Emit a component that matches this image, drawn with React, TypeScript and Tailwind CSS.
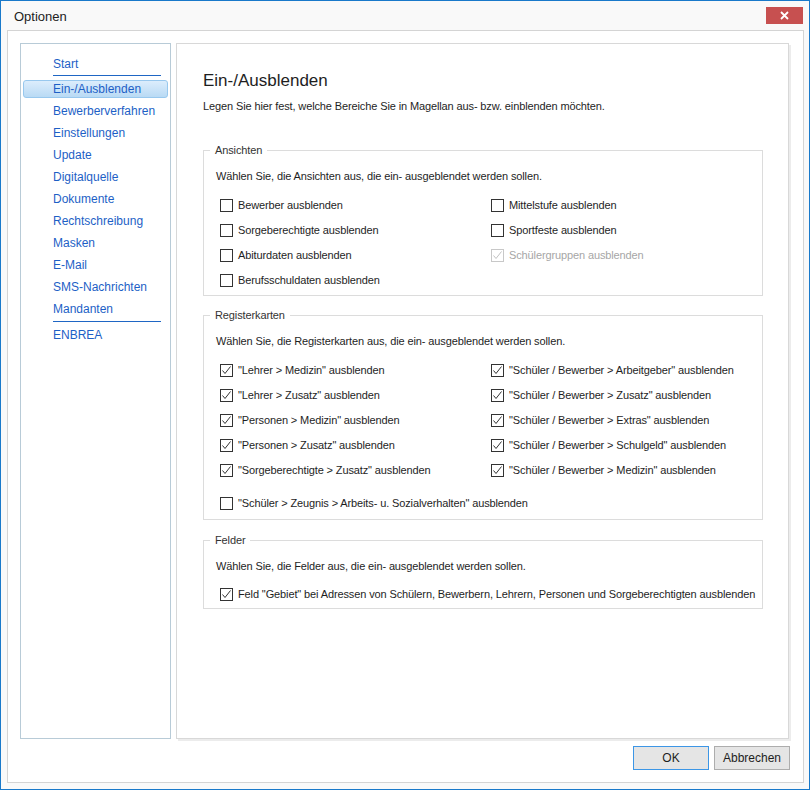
const NAV = [
  "Ein-/Ausblenden",
  "Bewerberverfahren",
  "Einstellungen",
  "Update",
  "Digitalquelle",
  "Dokumente",
  "Rechtschreibung",
  "Masken",
  "E-Mail",
  "SMS-Nachrichten",
  "Mandanten",
];

type Item = { label: string; checked?: boolean; disabled?: boolean };

const ANSICHTEN: Item[] = [
  { label: "Bewerber ausblenden" },
  { label: "Mittelstufe ausblenden" },
  { label: "Sorgeberechtigte ausblenden" },
  { label: "Sportfeste ausblenden" },
  { label: "Abiturdaten ausblenden" },
  { label: "Schülergruppen ausblenden", checked: true, disabled: true },
  { label: "Berufsschuldaten ausblenden" },
];

const REGISTER: Item[] = [
  { label: "\"Lehrer > Medizin\" ausblenden", checked: true },
  { label: "\"Schüler / Bewerber > Arbeitgeber\" ausblenden", checked: true },
  { label: "\"Lehrer > Zusatz\" ausblenden", checked: true },
  { label: "\"Schüler / Bewerber > Zusatz\" ausblenden", checked: true },
  { label: "\"Personen > Medizin\" ausblenden", checked: true },
  { label: "\"Schüler / Bewerber > Extras\" ausblenden", checked: true },
  { label: "\"Personen > Zusatz\" ausblenden", checked: true },
  { label: "\"Schüler / Bewerber > Schulgeld\" ausblenden", checked: true },
  { label: "\"Sorgeberechtigte > Zusatz\" ausblenden", checked: true },
  { label: "\"Schüler / Bewerber > Medizin\" ausblenden", checked: true },
];

function Check({ label, checked, disabled }: Item) {
  const stroke = disabled ? "#c2c2c2" : "#333333";
  return (
    <div className="flex items-center h-[25px] whitespace-nowrap">
      <span
        className={`w-[13px] h-[13px] shrink-0 border bg-white flex items-center justify-center ${
          disabled ? "border-[#c8c8c8]" : "border-[#333333]"
        }`}
      >
        {checked && (
          <svg width="11" height="11" viewBox="0 0 11 11">
            <polyline points="1.5,5.5 4,8.5 9.5,1.5" fill="none" stroke={stroke} strokeWidth="1" />
          </svg>
        )}
      </span>
      <span className={`ml-[5px] ${disabled ? "text-[#a6a6a6]" : "text-[#1e1e1e]"}`}>{label}</span>
    </div>
  );
}

function Group({ title, className, children }: { title: string; className?: string; children: React.ReactNode }) {
  return (
    <fieldset className={`border border-[#dcdcdc] px-[12px] w-[560px] min-w-0 overflow-hidden ${className ?? ""}`}>
      <legend className="-ml-[6px] px-[5px] leading-[16px] text-[#333]">{title}</legend>
      {children}
    </fieldset>
  );
}

export default function App() {
  return (
    <div
      className="w-[810px] h-[790px] border border-[#1979ca] bg-[#f9f9f9] flex flex-col text-[11px]"
      style={{ fontFamily: '"Liberation Sans", Arial, sans-serif' }}
    >
      {/* title bar */}
      <div className="h-[29px] shrink-0 flex items-start pl-[13px] pr-[6px]">
        <span className="mt-[8px] text-[13px] leading-[16px] text-[#222]">Optionen</span>
        <button className="ml-auto mt-[6px] w-[37px] h-[17px] bg-[#c75050] text-white flex items-center justify-center">
          <svg width="9" height="9" viewBox="0 0 9 9">
            <path d="M1 1L8 8M8 1L1 8" stroke="#fff" strokeWidth="1.8" />
          </svg>
        </button>
      </div>

      <div className="flex-1 flex pl-[6px] pr-[5px] pb-[6px]">
        <div className="flex-1 border border-[#d4d4d4] bg-white flex flex-col px-[12px] pt-[12px] pb-[12px]">
          <div className="flex-1 flex gap-[5px]">
            {/* sidebar */}
            <nav className="w-[151px] border border-[#b8cbd7] pt-[9px] text-[12px] text-[#1d5fc6] flex flex-col">
              <div className="h-[22px] leading-[22px] pl-[32px]">Start</div>
              <div className="ml-[32px] w-[108px] h-px bg-[#1f66c4]" />
              {NAV.map((n, i) =>
                i === 0 ? (
                  <div key={n} className="h-[22px] mt-[2px] flex items-center px-[2px]">
                    <div className="w-full h-[18px] pl-[29px] leading-[16px] rounded-[3px] border border-[#98c8ee] bg-gradient-to-b from-[#dcedfc] to-[#b9daf4]">
                      {n}
                    </div>
                  </div>
                ) : (
                  <div key={n} className="h-[22px] leading-[22px] pl-[32px]">
                    {n}
                  </div>
                )
              )}
              <div className="ml-[32px] mt-[1px] w-[108px] h-px bg-[#1f66c4]" />
              <div className="h-[22px] leading-[22px] pl-[32px] mt-[2px]">ENBREA</div>
            </nav>

            {/* content */}
            <main className="flex-1 mr-[2px] border border-[#d8d8d8] shadow-[2px_2px_0_#ececec] pl-[26px] pt-[25px] tracking-[-0.12px]">
              <h1 className="text-[17px] leading-[24px] tracking-normal text-[#1e1e1e]">Ein-/Ausblenden</h1>
              <p className="mt-[5px] leading-[16px] text-[#1e1e1e]">
                Legen Sie hier fest, welche Bereiche Sie in Magellan aus- bzw. einblenden möchten.
              </p>

              <Group title="Ansichten" className="mt-[28px] pb-[2px]">
                <p className="mt-[10px] leading-[16px] text-[#1e1e1e]">
                  Wählen Sie, die Ansichten aus, die ein- ausgeblendet werden sollen.
                </p>
                <div className="mt-[9px] grid grid-cols-[271px_1fr] pl-[4px]">
                  {ANSICHTEN.map((a) => (
                    <Check key={a.label} {...a} />
                  ))}
                </div>
              </Group>

              <Group title="Registerkarten" className="mt-[11px] pb-[3px]">
                <p className="mt-[10px] leading-[16px] text-[#1e1e1e]">
                  Wählen Sie, die Registerkarten aus, die ein- ausgeblendet werden sollen.
                </p>
                <div className="mt-[9px] grid grid-cols-[271px_1fr] pl-[4px]">
                  {REGISTER.map((a) => (
                    <Check key={a.label} {...a} />
                  ))}
                </div>
                <div className="mt-[8px] pl-[4px]">
                  <Check label={"\"Schüler > Zeugnis > Arbeits- u. Sozialverhalten\" ausblenden"} />
                </div>
              </Group>

              <Group title="Felder" className="mt-[12px] pb-[1px]">
                <p className="mt-[10px] leading-[16px] text-[#1e1e1e]">
                  Wählen Sie, die Felder aus, die ein- ausgeblendet werden sollen.
                </p>
                <div className="mt-[8px] pl-[4px]">
                  <Check
                    checked
                    label={"Feld \"Gebiet\" bei Adressen von Schülern, Bewerbern, Lehrern, Personen und Sorgeberechtigten ausblenden"}
                  />
                </div>
              </Group>
            </main>
          </div>

          {/* buttons */}
          <div className="flex justify-end gap-[5px] mt-[7px] pr-[1px] text-[12px] text-[#1e1e1e]">
            <button className="w-[76px] h-[24px] border border-[#3c96e6] bg-[#e5e5e5]">OK</button>
            <button className="w-[76px] h-[24px] border border-[#adadad] bg-[#e5e5e5]">Abbrechen</button>
          </div>
        </div>
      </div>
    </div>
  );
}
